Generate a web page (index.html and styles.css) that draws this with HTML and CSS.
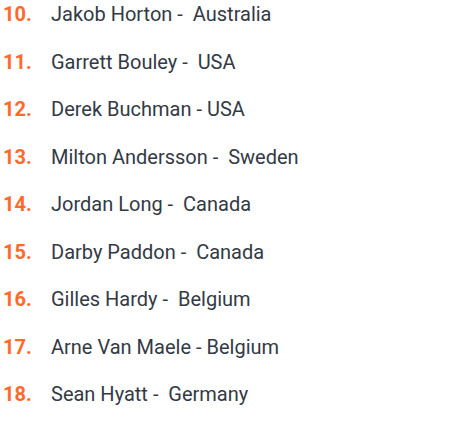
FILE: index.html
```html
<!DOCTYPE html>
<html>
<head>
<meta charset="utf-8">
<link rel="stylesheet" href="styles.css">
</head>
<body>
<ol class="list">
  <li class="row"><span class="num">10.</span><span class="name">Jakob Horton - &nbsp;Australia</span></li>
  <li class="row"><span class="num">11.</span><span class="name">Garrett Bouley - &nbsp;USA</span></li>
  <li class="row"><span class="num">12.</span><span class="name">Derek Buchman - USA</span></li>
  <li class="row"><span class="num">13.</span><span class="name">Milton Andersson - &nbsp;Sweden</span></li>
  <li class="row"><span class="num">14.</span><span class="name">Jordan Long - &nbsp;Canada</span></li>
  <li class="row"><span class="num">15.</span><span class="name">Darby Paddon - &nbsp;Canada</span></li>
  <li class="row"><span class="num">16.</span><span class="name">Gilles Hardy - &nbsp;Belgium</span></li>
  <li class="row"><span class="num">17.</span><span class="name">Arne Van Maele - Belgium</span></li>
  <li class="row"><span class="num">18.</span><span class="name">Sean Hyatt - &nbsp;Germany</span></li>
</ol>
</body>
</html>
```

FILE: styles.css
```css
html, body {
  margin: 0;
  padding: 0;
  background: #ffffff;
}
.list {
  list-style: none;
  margin: 0;
  padding: 0 0 0 3px;
  display: flex;
  flex-direction: column;
  gap: 19.5px;
  font-family: Roboto, "Liberation Sans", sans-serif;
  font-size: 20px;
}
.row {
  display: flex;
  align-items: baseline;
  line-height: 28px;
  height: 28px;
}
.num {
  width: 48px;
  flex-shrink: 0;
  color: #ff6a2c;
  font-weight: 700;
}
.name {
  color: #333a45;
}
```
